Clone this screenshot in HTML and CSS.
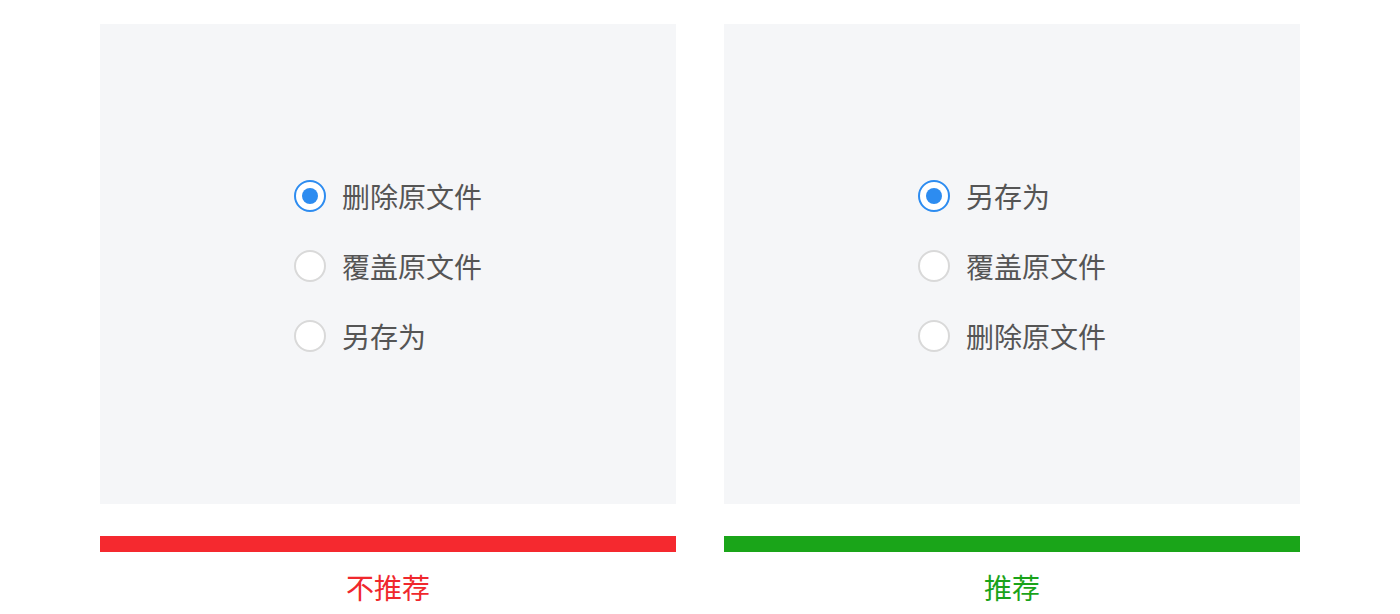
FILE: index.html
```html
<!DOCTYPE html>
<html lang="zh-CN">
<head>
    <meta charset="UTF-8">
    <meta name="viewport" content="width=device-width, initial-scale=1.0">
    <title>文件冲突选项</title>

    <link rel="stylesheet" href="styles.css">
</head>
<body>

<div class="compare">

    <!-- bad example -->
    <div class="case">
        <div class="panel">
            <div class="options">
                <label class="option"><span class="radio checked"></span>删除原文件</label>
                <label class="option"><span class="radio"></span>覆盖原文件</label>
                <label class="option"><span class="radio"></span>另存为</label>
            </div>
        </div>
        <div class="bar bad"></div>
        <p class="verdict bad">不推荐</p>
    </div>

    <!-- good example -->
    <div class="case">
        <div class="panel">
            <div class="options">
                <label class="option"><span class="radio checked"></span>另存为</label>
                <label class="option"><span class="radio"></span>覆盖原文件</label>
                <label class="option"><span class="radio"></span>删除原文件</label>
            </div>
        </div>
        <div class="bar good"></div>
        <p class="verdict good">推荐</p>
    </div>

</div>

</body>
</html>
```

FILE: styles.css
```css
body {
    font-family: "Noto Sans CJK SC", "Noto Sans", sans-serif;
    background-color: #fff;
    margin: 0;
    padding: 0;
}

.compare {
    display: flex;
    justify-content: center;
    gap: 48px;
    padding-top: 24px;
}

.case {
    width: 576px;
}

.panel {
    height: 480px;
    box-sizing: border-box;
    padding-top: 4px;
    background-color: #f5f6f8;
    display: flex;
    align-items: center;
    justify-content: center;
}

.options {
    display: flex;
    flex-direction: column;
}

.option {
    display: flex;
    align-items: center;
    height: 70px;
    font-size: 28px;
    line-height: 1;
    color: #555;
    cursor: pointer;
}

.radio {
    width: 32px;
    height: 32px;
    box-sizing: border-box;
    border: 2px solid #d9d9d9;
    border-radius: 50%;
    background-color: #fff;
    margin-right: 16px;
    display: flex;
    align-items: center;
    justify-content: center;
}

.radio.checked {
    border-color: #2d8cf0;
}

.radio.checked::after {
    content: "";
    width: 16px;
    height: 16px;
    border-radius: 50%;
    background-color: #2d8cf0;
}

.bar {
    height: 16px;
    margin-top: 32px;
}

.bar.bad {
    background-color: #f5292f;
}

.bar.good {
    background-color: #1aa519;
}

.verdict {
    margin: 15px 0 0;
    text-align: center;
    font-size: 28px;
    line-height: 40px;
}

.verdict.bad {
    color: #f0282d;
}

.verdict.good {
    color: #1aa31a;
}
```
